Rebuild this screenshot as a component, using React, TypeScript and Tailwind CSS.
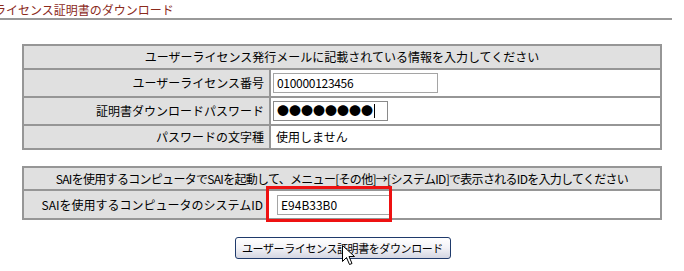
export default function App() {
  const font = { fontFamily: '"Noto Sans CJK JP", "Liberation Sans", sans-serif' };

  return (
    <div className="relative w-[684px] h-[271px] overflow-hidden bg-white text-[12px] leading-[14px] text-black" style={font}>
      {/* page title */}
      <div className="w-[672px] h-[20px] border-b-2 border-[#999999]">
        <div className="ml-[-6px] pt-[2px] text-[12px] leading-[15px] text-[#8b2a1c] whitespace-nowrap">
          ライセンス証明書のダウンロード
        </div>
      </div>

      {/* license info table */}
      <div className="ml-[22px] mt-[24px] w-[640px] grid grid-cols-[245px_1fr] gap-[2px] p-[2px] bg-[#969696]">
        <div className="col-span-2 h-[22px] bg-[#e0e0e0] flex items-center justify-center">
          ユーザーライセンス発行メールに記載されている情報を入力してください
        </div>

        <div className="h-[26px] bg-[#e0e0e0] flex items-center justify-end pr-[5px]">ユーザーライセンス番号</div>
        <div className="h-[26px] bg-white flex items-center pl-[2px]">
          <div className="w-[165px] h-[20px] border border-[#a5a5a5] flex items-center pl-[3px] tracking-[-0.3px]">
            010000123456
          </div>
        </div>

        <div className="h-[26px] bg-[#e0e0e0] flex items-center justify-end pr-[5px]">証明書ダウンロードパスワード</div>
        <div className="h-[26px] bg-white flex items-center pl-[2px]">
          <div className="w-[115px] h-[20px] border border-[#8a8a8a] flex items-center pl-[3px]">
            <span className="text-[12px] leading-[12px]">●●●●●●●●</span>
            <span className="ml-[1px] w-px h-[14px] bg-black" />
          </div>
        </div>

        <div className="h-[22px] bg-[#e0e0e0] flex items-center justify-end pr-[5px]">パスワードの文字種</div>
        <div className="h-[22px] bg-white flex items-center pl-[5px]">使用しません</div>
      </div>

      {/* system id table */}
      <div className="relative ml-[22px] mt-[16px] w-[640px] grid grid-cols-[243px_1fr] gap-[2px] p-[2px] bg-[#969696]">
        <div className="col-span-2 h-[21px] bg-[#e0e0e0] flex items-center justify-center tracking-[-0.7px] whitespace-nowrap">
          SAIを使用するコンピュータでSAIを起動して、メニュー[その他]→[システムID]で表示されるIDを入力してください
        </div>

        <div className="h-[27px] bg-[#e0e0e0] flex items-center justify-end pr-[4px] whitespace-nowrap">SAIを使用するコンピュータのシステムID</div>
        <div className="h-[27px] bg-white flex items-center pl-[8px]">
          <div className="w-[113px] h-[20px] border border-[#a5a5a5] flex items-center pl-[3px]">E94B33B0</div>
        </div>

        {/* red highlight annotation */}
        <div className="absolute left-[244px] top-[20px] w-[126px] h-[36px] border-[3px] border-[#ee1111]" />
      </div>

      {/* download button */}
      <div className="w-[684px] flex justify-center mt-[17px]">
        <button className="ml-[1px] w-[216px] h-[22px] rounded-[3px] border border-[#1f3a6b] bg-gradient-to-b from-white via-[#f2f2f6] to-[#d4d6e2] text-[11px] leading-[14px] tracking-[-0.4px] whitespace-nowrap text-black flex items-center justify-center">
          ユーザーライセンス証明書をダウンロード
        </button>
      </div>

      {/* mouse pointer */}
      <svg className="absolute left-[342px] top-[245px]" width="14" height="22" viewBox="0 0 14 22">
        <path d="M0.5 0.5 L0.5 16.5 L4.5 12.5 L7.5 19.5 L10 18.5 L7 11.5 L12.5 11.5 Z" fill="white" stroke="black" strokeWidth="1" />
      </svg>
    </div>
  );
}
